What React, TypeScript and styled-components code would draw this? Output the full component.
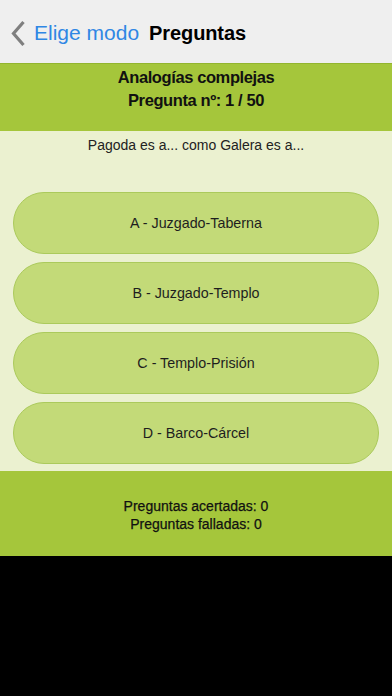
import React from "react";
import styled, { createGlobalStyle } from "styled-components";

const Global = createGlobalStyle`
  html, body { margin: 0; padding: 0; background: #000; }
  body { font-family: "Liberation Sans", Arial, sans-serif; }
  * { box-sizing: border-box; }
`;

const Screen = styled.div`
  width: 392px;
  height: 696px;
  background: #000;
  display: flex;
  flex-direction: column;
`;

const NavBar = styled.div`
  height: 63px;
  background: #efefef;
  display: flex;
  align-items: center;
  padding: 3px 0 0 11px;
  gap: 10px;
`;

const Back = styled.div`
  display: flex;
  align-items: center;
  gap: 9px;
  color: #2f87e4;
  font-size: 21px;
`;

const NavTitle = styled.div`
  color: #000;
  font-size: 20px;
  font-weight: bold;
  letter-spacing: -0.1px;
`;

const Header = styled.div`
  height: 68px;
  background: #a5c63b;
  border-top: 1px solid #93b52e;
  padding-top: 2px;
  text-align: center;
  color: #111;
  font-size: 16.5px;
  font-weight: bold;
  line-height: 23px;
  letter-spacing: -0.4px;
`;

const Content = styled.div`
  height: 340px;
  background: #ebf1d0;
  display: flex;
  flex-direction: column;
`;

const Question = styled.div`
  text-align: center;
  font-size: 14px;
  color: #222;
  line-height: 18px;
  padding-top: 5px;
  height: 61px;
`;

const Options = styled.div`
  display: flex;
  flex-direction: column;
  gap: 8px;
  padding: 0 13px;
`;

const Option = styled.div`
  height: 62px;
  border-radius: 31px;
  background: #c3da78;
  border: 1px solid #abca5c;
  display: flex;
  align-items: center;
  justify-content: center;
  font-size: 14.3px;
  color: #1e1e1e;
`;

const Footer = styled.div`
  height: 85px;
  background: #a5c63b;
  display: flex;
  flex-direction: column;
  align-items: center;
  justify-content: center;
  padding-top: 3px;
  font-size: 14px;
  line-height: 18px;
  color: #111;
  -webkit-text-stroke: 0.25px #111;
`;

const options = [
  "A - Juzgado-Taberna",
  "B - Juzgado-Templo",
  "C - Templo-Prisión",
  "D - Barco-Cárcel",
];

export default function App() {
  return (
    <>
      <Global />
      <Screen>
        <NavBar>
          <Back>
            <svg width="14" height="27" viewBox="0 0 14 27">
              <path
                d="M12.5 2 L2.5 13.5 L12.5 25"
                fill="none"
                stroke="#7f7f7f"
                strokeWidth="3.2"
                strokeLinecap="butt"
                strokeLinejoin="miter"
              />
            </svg>
            <span>Elige modo</span>
          </Back>
          <NavTitle>Preguntas</NavTitle>
        </NavBar>
        <Header>
          <div>Analogías complejas</div>
          <div>Pregunta nº: 1 / 50</div>
        </Header>
        <Content>
          <Question>Pagoda es a... como Galera es a...</Question>
          <Options>
            {options.map((o) => (
              <Option key={o}>{o}</Option>
            ))}
          </Options>
        </Content>
        <Footer>
          <div>Preguntas acertadas: 0</div>
          <div>Preguntas falladas: 0</div>
        </Footer>
      </Screen>
    </>
  );
}
